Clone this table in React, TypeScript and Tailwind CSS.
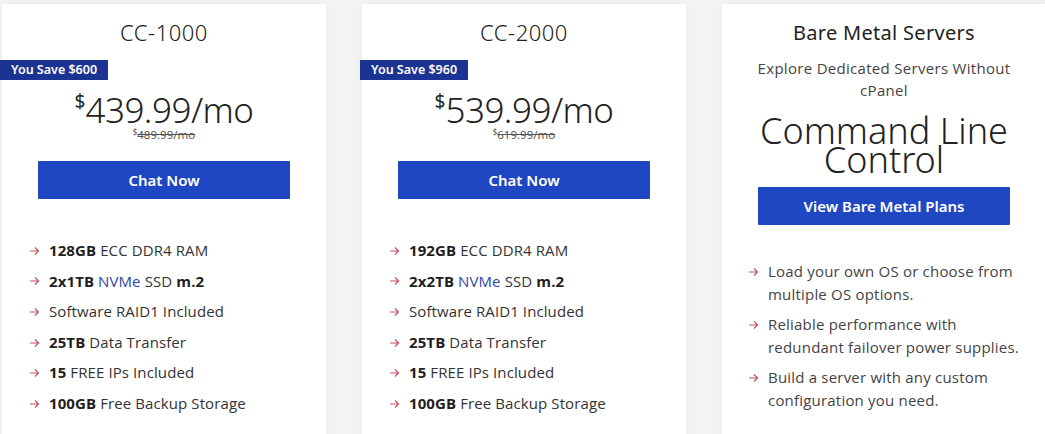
import React from 'react';

const head = { fontFamily: '"Noto Sans", "Open Sans", sans-serif' };
const body = { fontFamily: '"Open Sans", "Noto Sans", sans-serif' };

const Arrow = () => (
  <svg width="11" height="10" viewBox="0 0 11 10" className="shrink-0 mt-[1px]">
    <path d="M1 5h8.5M6 1.5L9.5 5 6 8.5" fill="none" stroke="#c8525f" strokeWidth="1.2" />
  </svg>
);

function PlanCard({
  name,
  save,
  price,
  oldPrice,
  features,
}: {
  name: string;
  save: string;
  price: string;
  oldPrice: string;
  features: React.ReactNode[];
}) {
  return (
    <div className="relative w-[324px] h-[450px] shrink-0 bg-white shadow-[0_0_6px_rgba(0,0,0,0.06)]">
      <h2 style={head} className="pt-[13px] text-center text-[22px] leading-[30px] font-light text-[#222] tracking-[0.5px]">
        {name}
      </h2>
      <div
        style={head}
        className="absolute left-[-2px] top-[56px] h-[20px] px-[11px] bg-[#1b3494] text-white text-[12.5px] leading-[20px] font-semibold"
      >
        {save}
      </div>
      <div style={head} className="mt-[46px] flex justify-center items-start text-[#222]">
        <span className="text-[19px] leading-[20px] mt-[-2px]">$</span>
        <span className="text-[35px] leading-[34px] font-light tracking-[-0.5px]">{price}/mo</span>
      </div>
      <div style={head} className="flex justify-center text-[#555] mt-[1px]">
        <span className="text-[8px] leading-[8px]">$</span>
        <span className="text-[11.5px] leading-[14px] line-through">{oldPrice}/mo</span>
      </div>
      <div className="mt-[19px] flex justify-center">
        <button
          style={head}
          className="w-[252px] h-[38px] bg-[#2047c2] text-white text-[15px] font-semibold rounded-[1px]"
        >
          Chat Now
        </button>
      </div>
      <ul style={body} className="mt-[36px] pl-[27px] text-[15px] tracking-[0.1px] text-[#333]">
        {features.map((f, i) => (
          <li key={i} className="flex items-center gap-[9px] h-[30.6px]">
            <Arrow />
            <span>{f}</span>
          </li>
        ))}
      </ul>
    </div>
  );
}

const B = ({ children }: { children: React.ReactNode }) => (
  <b className="font-bold text-[#1f1f1f]">{children}</b>
);

export default function App() {
  return (
    <div className="w-[1045px] h-[434px] overflow-hidden bg-[#f3f3f3] pt-[4px] pl-[2px] flex gap-[36px]">
      <PlanCard
        name="CC-1000"
        save="You Save $600"
        price="439.99"
        oldPrice="489.99"
        features={[
          <><B>128GB</B> ECC DDR4 RAM</>,
          <><B>2x1TB</B> <span className="text-[#3146a8]">NVMe</span> SSD <B>m.2</B></>,
          <>Software RAID1 Included</>,
          <><B>25TB</B> Data Transfer</>,
          <><B>15</B> FREE IPs Included</>,
          <><B>100GB</B> Free Backup Storage</>,
        ]}
      />
      <PlanCard
        name="CC-2000"
        save="You Save $960"
        price="539.99"
        oldPrice="619.99"
        features={[
          <><B>192GB</B> ECC DDR4 RAM</>,
          <><B>2x2TB</B> <span className="text-[#3146a8]">NVMe</span> SSD <B>m.2</B></>,
          <>Software RAID1 Included</>,
          <><B>25TB</B> Data Transfer</>,
          <><B>15</B> FREE IPs Included</>,
          <><B>100GB</B> Free Backup Storage</>,
        ]}
      />
      <div className="w-[324px] h-[450px] shrink-0 bg-white shadow-[0_0_6px_rgba(0,0,0,0.06)]">
        <h2 style={head} className="pt-[15px] text-center text-[20px] leading-[28px] text-[#222] tracking-[0.3px]">
          Bare Metal Servers
        </h2>
        <p style={body} className="mt-[10px] mx-auto w-[262px] text-center text-[15px] leading-[22px] tracking-[0.3px] text-[#444]">
          Explore Dedicated Servers Without cPanel
        </p>
        <h3 style={head} className="mt-[15px] mx-auto w-[280px] text-center text-[36px] leading-[29px] font-light text-[#222]">
          Command Line Control
        </h3>
        <div className="mt-[13px] flex justify-center">
          <button
            style={head}
            className="w-[252px] h-[38px] bg-[#2047c2] text-white text-[15px] font-semibold rounded-[1px]"
          >
            View Bare Metal Plans
          </button>
        </div>
        <ul style={body} className="mt-[35px] pl-[26px] pr-[20px] text-[15px] leading-[23px] tracking-[0.2px] text-[#444] flex flex-col gap-[7px]">
          {[
            'Load your own OS or choose from multiple OS options.',
            'Reliable performance with redundant failover power supplies.',
            'Build a server with any custom configuration you need.',
          ].map((t) => (
            <li key={t} className="flex items-start gap-[9px]">
              <span className="h-[23px] flex items-center"><Arrow /></span>
              <span>{t}</span>
            </li>
          ))}
        </ul>
      </div>
    </div>
  );
}
